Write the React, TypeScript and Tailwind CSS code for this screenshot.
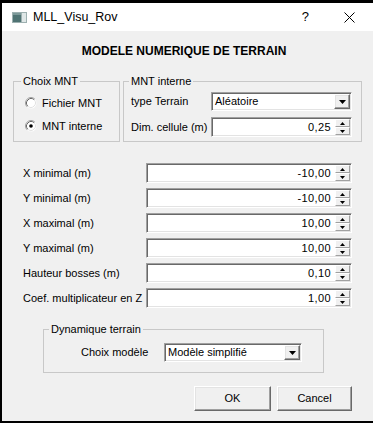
import React from "react";

const sunken =
  "bg-white border border-t-[#a0a0a0] border-l-[#a0a0a0] border-b-white border-r-white shadow-[inset_1px_1px_0_#696969,inset_-1px_-1px_0_#e3e3e3]";
const raised =
  "bg-[#f0f0f0] border border-t-white border-l-white border-b-[#696969] border-r-[#696969] shadow-[inset_-1px_-1px_0_#a0a0a0,inset_1px_1px_0_#e3e3e3]";
const smallRaised =
  "bg-[#f0f0f0] border border-t-white border-l-white border-b-[#a0a0a0] border-r-[#a0a0a0]";

function Radio({ checked }: { checked?: boolean }) {
  return (
    <svg width="12" height="12" viewBox="0 0 12 12" className="shrink-0">
      <circle cx="6" cy="6" r="5.5" fill="white" />
      <path d="M2.11 9.89 A5.5 5.5 0 0 1 9.89 2.11" fill="none" stroke="#a0a0a0" />
      <path d="M2.82 9.18 A4.5 4.5 0 0 1 9.18 2.82" fill="none" stroke="#696969" />
      <path d="M9.18 2.82 A4.5 4.5 0 0 1 2.82 9.18" fill="none" stroke="#e3e3e3" />
      {checked && <circle cx="6" cy="6" r="1.8" fill="black" />}
    </svg>
  );
}

function SpinButtons() {
  return (
    <div className="flex flex-col w-[15px] h-full">
      <div className={`${smallRaised} flex-1 flex items-center justify-center`}>
        <svg width="5" height="3" viewBox="0 0 5 3">
          <path d="M2.5 0 L5 3 L0 3 Z" fill="black" />
        </svg>
      </div>
      <div className={`${smallRaised} flex-1 flex items-center justify-center`}>
        <svg width="5" height="3" viewBox="0 0 5 3">
          <path d="M0 0 L5 0 L2.5 3 Z" fill="black" />
        </svg>
      </div>
    </div>
  );
}

function SpinBox({ value, className }: { value: string; className: string }) {
  return (
    <div className={`${sunken} ${className} h-[20px] flex items-stretch p-[1px]`}>
      <div className="flex-1 flex items-center justify-end pr-[4px] text-[11px] tracking-[0.4px]">{value}</div>
      <SpinButtons />
    </div>
  );
}

function Combo({ value, className }: { value: string; className: string }) {
  return (
    <div className={`${sunken} ${className} h-[19px] flex items-stretch p-[1px]`}>
      <div className="flex-1 flex items-center pl-[2px] text-[11px]">{value}</div>
      <div className={`${raised} w-[16px] flex items-center justify-center`}>
        <svg width="7" height="4" viewBox="0 0 7 4">
          <path d="M0 0 L7 0 L3.5 4 Z" fill="black" />
        </svg>
      </div>
    </div>
  );
}

function Row({ label, value }: { label: string; value: string }) {
  return (
    <div className="flex items-center pl-[10px] pr-[10px]">
      <div className="w-[123px] text-[11px]">{label}</div>
      <SpinBox value={value} className="flex-1" />
    </div>
  );
}

export default function App() {
  return (
    <div
      className="w-[373px] h-[423px] bg-black flex flex-col pt-[3px] pl-[2px] pb-[2px] text-black"
      style={{ fontFamily: "'Liberation Sans', Arial, sans-serif" }}
    >
      <div className="h-[28px] bg-white flex items-center pl-[10px] pr-[18px] shrink-0">
        <svg width="15" height="11" viewBox="0 0 15 11" className="mr-[6px]">
          <rect x="0" y="0" width="15" height="11" fill="#9db0b0" />
          <rect x="1" y="1" width="8" height="9" fill="#4f7373" />
          <rect x="10" y="1" width="4" height="9" fill="#dfe7e7" />
          <rect x="1" y="1" width="8" height="2" fill="#7d9999" />
        </svg>
        <div className="flex-1 text-[12.5px]">MLL_Visu_Rov</div>
        <div className="text-[13px] mr-[35px]">?</div>
        <svg width="11" height="11" viewBox="0 0 11 11">
          <path d="M0.5 0.5 L10.5 10.5 M10.5 0.5 L0.5 10.5" stroke="black" strokeWidth="1" />
        </svg>
      </div>
      <div className="flex-1 bg-[#f0f0f0] flex flex-col pl-[11px] pr-[11px]">
        <div className="mt-[13px] pr-[7px] text-center font-bold text-[12px] leading-[14px]">
          MODELE NUMERIQUE DE TERRAIN
        </div>
        <div className="flex gap-[3px] mt-[17px]">
          <fieldset className="w-[107px] h-[67px] border border-[#c8c8c8] pl-[11px]">
            <legend className="ml-[-4px] px-[2px] text-[11px] leading-[13px]">Choix MNT</legend>
            <div className="flex flex-col gap-[7px] pt-[7px]">
              <div className="flex items-center gap-[5px] h-[16px] text-[11px]">
                <Radio />
                <span>Fichier MNT</span>
              </div>
              <div className="flex items-center gap-[5px] h-[16px] text-[11px]">
                <Radio checked />
                <span>MNT interne</span>
              </div>
            </div>
          </fieldset>
          <fieldset className="flex-1 h-[67px] border border-[#c8c8c8] pl-[7px] pr-[9px]">
            <legend className="ml-[-2px] px-[2px] text-[11px] leading-[13px]">MNT interne</legend>
            <div className="flex flex-col gap-[6px] pt-[4px]">
              <div className="flex items-center">
                <div className="w-[80px] text-[11px]">type Terrain</div>
                <Combo value="Aléatoire" className="flex-1" />
              </div>
              <div className="flex items-center">
                <div className="w-[80px] text-[11px]">Dim. cellule (m)</div>
                <SpinBox value="0,25" className="flex-1" />
              </div>
            </div>
          </fieldset>
        </div>
        <div className="flex flex-col gap-[5px] mt-[21px]">
          <Row label="X minimal (m)" value="-10,00" />
          <Row label="Y minimal (m)" value="-10,00" />
          <Row label="X maximal (m)" value="10,00" />
          <Row label="Y maximal (m)" value="10,00" />
          <Row label="Hauteur bosses (m)" value="0,10" />
          <Row label="Coef. multiplicateur en Z" value="1,00" />
        </div>
        <fieldset className="ml-[30px] w-[281px] h-[50px] mt-[15px] border border-[#c8c8c8] pl-[37px]">
          <legend className="ml-[-32px] px-[2px] text-[11px] leading-[13px]">Dynamique terrain</legend>
          <div className="flex items-center pt-[7px]">
            <div className="w-[83px] text-[11px]">Choix modèle</div>
            <Combo value="Modèle simplifié" className="w-[138px]" />
          </div>
        </fieldset>
        <div className="flex justify-end gap-[6px] mt-[13px] pr-[10px]">
          <div className={`${raised} w-[77px] h-[25px] flex items-center justify-center text-[11px]`}>OK</div>
          <div className={`${raised} w-[75px] h-[25px] flex items-center justify-center text-[11px]`}>Cancel</div>
        </div>
      </div>
    </div>
  );
}
